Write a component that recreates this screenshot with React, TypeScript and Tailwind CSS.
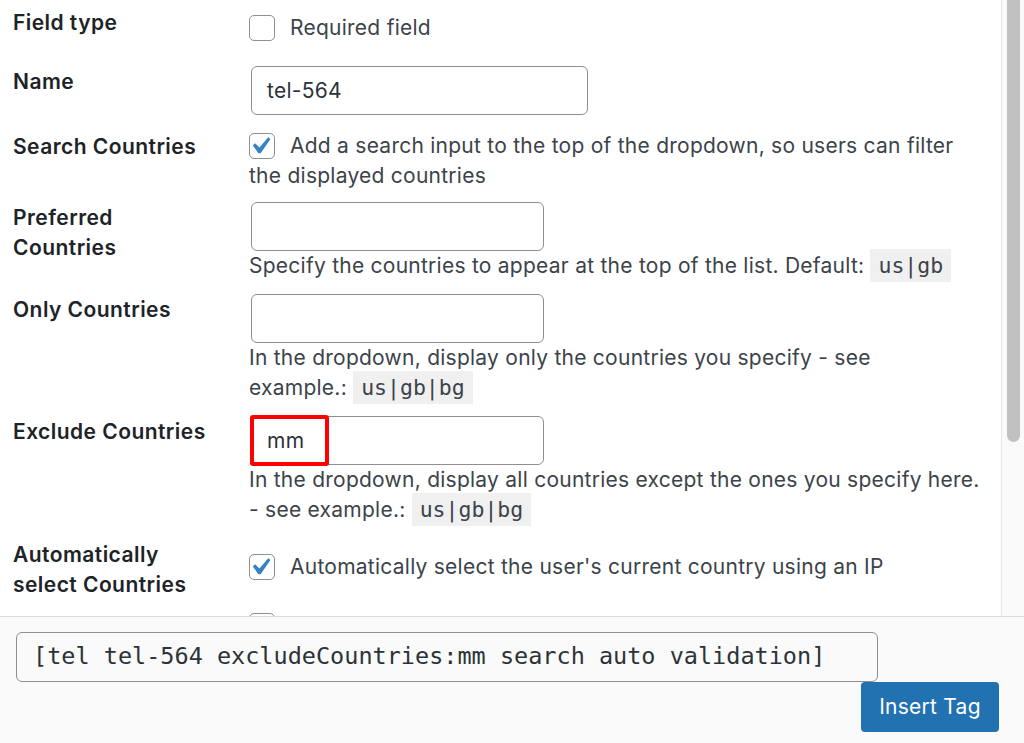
import React from "react";

const SANS = "font-['Inter','Noto_Sans',sans-serif]";

function Checkbox({ checked }: { checked?: boolean }) {
  return (
    <span className="relative inline-block w-[26px] h-[26px] shrink-0 rounded-[5px] border-[1.5px] border-[#8c8f94] bg-white">
      {checked && (
        <svg
          viewBox="0 0 20 20"
          className="absolute left-[-7px] top-[-5px] w-[34px] h-[34px]"
        >
          <path
            d="M14.83 4.89l1.34.94-5.81 8.38H9.02L5.78 9.67l1.34-1.25 2.57 2.4z"
            fill="#3582c4"
          />
        </svg>
      )}
    </span>
  );
}

function Code({ children }: { children: React.ReactNode }) {
  return (
    <code className="bg-[#f0f0f1] px-[8px] py-[4px] font-['DejaVu_Sans_Mono',monospace] text-[21.5px] text-[#3c434a] tracking-[0px]">
      {children}
    </code>
  );
}

function Label({ children }: { children: React.ReactNode }) {
  return (
    <div className="w-[249px] shrink-0 pt-[1px] pl-[13px] pr-[30px] text-[21px] tracking-[0.45px] leading-[30px] font-semibold text-[#1d2327]">
      {children}
    </div>
  );
}

function TextInput({ value, width }: { value?: string; width: string }) {
  return (
    <div
      className={`${width} ml-[2px] h-[49px] rounded-[6px] border-[1.5px] border-[#8c8f94] bg-white pl-[15px] flex items-center text-[21px] tracking-[0.25px] text-[#2c3338]`}
    >
      {value}
    </div>
  );
}

const BODY = "flex-1 text-[21px] tracking-[0.25px] leading-[30px] text-[#3c434a]";

export default function App() {
  return (
    <div className={`w-[1024px] h-[743px] overflow-hidden bg-white ${SANS} flex flex-col`}>
      <div className="h-[616px] flex overflow-hidden">
        <div className="flex-1 overflow-hidden">
          {/* Field type */}
          <div className="flex mt-[7px]">
            <Label>Field type</Label>
            <div className={`${BODY} pt-[6px]`}>
              <div className="flex items-center h-[30px] gap-[15px]">
                <Checkbox />
                <span>Required field</span>
              </div>
            </div>
          </div>

          {/* Name */}
          <div className="flex mt-[23px]">
            <Label>Name</Label>
            <div>
              <TextInput value="tel-564" width="w-[337px]" />
            </div>
          </div>

          {/* Search Countries */}
          <div className="flex mt-[16px]">
            <Label>Search Countries</Label>
            <div className={`${BODY} leading-[29.5px]`}>
              <div className="flex items-center gap-[15px]">
                <Checkbox checked />
                <span className="whitespace-nowrap">
                  Add a search input to the top of the dropdown, so users can filter
                </span>
              </div>
              <div>the displayed countries</div>
            </div>
          </div>

          {/* Preferred Countries */}
          <div className="flex mt-[11px]">
            <Label>
              Preferred
              <br />
              Countries
            </Label>
            <div className={BODY}>
              <TextInput width="w-[293px]" />
              <div className="whitespace-nowrap">
                Specify the countries to appear at the top of the list. Default: <Code>us|gb</Code>
              </div>
            </div>
          </div>

          {/* Only Countries */}
          <div className="flex mt-[13px]">
            <Label>Only Countries</Label>
            <div className={BODY}>
              <TextInput width="w-[293px]" />
              <div className="whitespace-nowrap">
                In the dropdown, display only the countries you specify - see
              </div>
              <div className="whitespace-nowrap">
                example.: <Code>us|gb|bg</Code>
              </div>
            </div>
          </div>

          {/* Exclude Countries */}
          <div className="flex mt-[13px]">
            <Label>Exclude Countries</Label>
            <div className={BODY}>
              <div className="relative w-[295px]">
                <TextInput value="mm" width="w-[293px]" />
                <div className="absolute left-[1px] top-[-1px] w-[79px] h-[51px] border-[4px] border-[#ff0000] rounded-[3px]" />
              </div>
              <div className="whitespace-nowrap">
                In the dropdown, display all countries except the ones you specify here.
              </div>
              <div className="whitespace-nowrap">
                - see example.: <Code>us|gb|bg</Code>
              </div>
            </div>
          </div>

          {/* Automatically select */}
          <div className="flex mt-[14px]">
            <Label>
              Automatically
              <br />
              select Countries
            </Label>
            <div className={`${BODY} pt-[13px]`}>
              <div className="flex items-center gap-[15px]">
                <Checkbox checked />
                <span className="whitespace-nowrap">
                  Automatically select the user's current country using an IP
                </span>
              </div>
            </div>
          </div>

          {/* Validation (clipped) */}
          <div className="flex mt-[10px]">
            <Label>Validation</Label>
            <div className={`${BODY} pt-[1px]`}>
              <div className="flex items-center gap-[15px]">
                <Checkbox />
                <span className="whitespace-nowrap">
                  Enable validation to check the number is valid
                </span>
              </div>
            </div>
          </div>
        </div>

        {/* Scrollbar */}
        <div className="w-[23px] shrink-0 border-l-[1.5px] border-[#e6e6e6] bg-[#fafafa] pl-[5px]">
          <div className="w-[13px] h-[442px] bg-[#c1c1c1] rounded-b-full" />
        </div>
      </div>

      {/* Footer */}
      <div className="flex-1 border-t-[1.5px] border-[#dcdcde] bg-[#fafafa] pt-[15px]">
        <div className="ml-[16px] w-[862px] h-[50px] rounded-[6px] border-[1.5px] border-[#8c8f94] bg-[#fafafa] pl-[16px] flex items-center font-['DejaVu_Sans_Mono',monospace] text-[23.5px] text-[#2c3338] whitespace-nowrap">
          [tel tel-564 excludeCountries:mm search auto validation]
        </div>
        <div className="flex justify-end pr-[25px]">
          <button className="w-[138px] h-[50px] rounded-[4px] bg-[#2271b1] text-white text-[21px] tracking-[0.25px] leading-[50px]">
            Insert Tag
          </button>
        </div>
      </div>
    </div>
  );
}
